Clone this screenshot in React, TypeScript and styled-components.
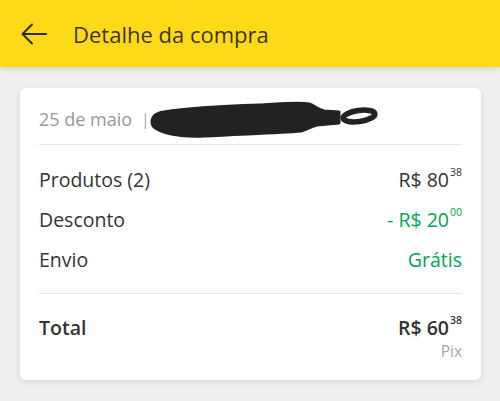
import styled, { createGlobalStyle } from 'styled-components';

const GlobalStyle = createGlobalStyle`
	html, body {
		margin: 0;
		padding: 0;
		background: #efefef;
		font-family: 'Open Sans', 'Noto Sans', sans-serif;
	}
`;

const Page = styled.div`
	width: 500px;
	height: 401px;
	background: #efefef;
	overflow: hidden;
`;

const Header = styled.header`
	height: 67px;
	background: #fdda17;
	display: flex;
	align-items: center;
	padding-left: 21px;
	box-shadow: 0 2px 6px rgba(0, 0, 0, 0.12);
	position: relative;
`;

const BackButton = styled.div`
	width: 26px;
	height: 24px;
	display: flex;
	align-items: center;
	margin-right: 26px;
`;

const Title = styled.h1`
	margin: 0;
	font-size: 22px;
	font-weight: 400;
	color: rgba(0, 0, 0, 0.78);
`;

const Content = styled.main`
	padding: 21px 19px 0 20px;
`;

const Card = styled.section`
	background: #fff;
	border-radius: 6px;
	box-shadow: 0 2px 6px rgba(0, 0, 0, 0.1);
	padding: 0 19px;
`;

const DateRow = styled.div`
	height: 56px;
	display: flex;
	align-items: center;
	padding-top: 5px;
	box-sizing: border-box;
	color: #999;
	font-size: 18px;
	position: relative;
`;

const Separator = styled.span`
	margin: 0 8px 0 9px;
	font-size: 16px;
	color: #aaa;
`;

const Redaction = styled.svg`
	position: absolute;
	left: 100px;
	top: 12px;
`;

const Divider = styled.hr`
	margin: 0;
	border: none;
	border-top: 1px solid #e6e6e6;
`;

const Lines = styled.div`
	padding: 14px 0;
`;

const Row = styled.div`
	height: 40px;
	display: flex;
	align-items: center;
	justify-content: space-between;
	font-size: 19.5px;
	color: #333;
`;

const Value = styled.span<{ $green?: boolean; $bold?: boolean }>`
	color: ${(p) => (p.$green ? '#00a650' : '#333')};
	font-weight: ${(p) => (p.$bold ? 600 : 400)};
`;

const Cents = styled.sup`
	font-size: 10.5px;
	vertical-align: top;
	position: relative;
	top: -1px;
	margin-left: 1px;
`;

const TotalBlock = styled.div`
	padding: 19px 0 19px;
`;

const TotalRow = styled(Row)`
	height: 28px;
	font-weight: 600;
`;

const Method = styled.div`
	text-align: right;
	font-size: 15.5px;
	color: #a6a6a6;
	line-height: 20px;
`;

const Price = ({ whole, cents, green, bold, prefix }: { whole: string; cents: string; green?: boolean; bold?: boolean; prefix?: string }) => (
	<Value $green={green} $bold={bold}>
		{prefix}R$ {whole}
		<Cents>{cents}</Cents>
	</Value>
);

export default function App() {
	return (
		<>
			<GlobalStyle />
			<Page>
				<Header>
					<BackButton>
						<svg width="26" height="22" viewBox="0 0 26 22" fill="none" stroke="#2b2b2b" strokeWidth="2" strokeLinecap="round" strokeLinejoin="round">
							<path d="M25 11H2" />
							<path d="M11 1.5L1.5 11L11 20.5" />
						</svg>
					</BackButton>
					<Title>Detalhe da compra</Title>
				</Header>
				<Content>
					<Card>
						<DateRow>
							25 de maio<Separator>|</Separator>#
							<Redaction width="245" height="40" viewBox="0 0 245 40">
								<path
									d="M13 22 C13 16 18 13 25 12 C50 8 90 6 120 5 C140 4 160 2 170 4 C176 6 178 9 185 11 L200 12 L200 23 L178 25 C172 26 168 30 162 31 C140 33 100 34 65 36 C40 37 25 33 18 29 C14 27 13 25 13 22 Z"
									fill="#222"
									stroke="#222"
									strokeWidth="3"
									strokeLinejoin="round"
								/>
								<ellipse cx="220" cy="16" rx="16" ry="5.5" transform="rotate(-8 220 16)" fill="none" stroke="#222" strokeWidth="5.5" />
							</Redaction>
						</DateRow>
						<Divider />
						<Lines>
							<Row>
								<span>Produtos (2)</span>
								<Price whole="80" cents="38" />
							</Row>
							<Row>
								<span>Desconto</span>
								<Price prefix="- " whole="20" cents="00" green />
							</Row>
							<Row>
								<span>Envio</span>
								<Value $green>Grátis</Value>
							</Row>
						</Lines>
						<Divider />
						<TotalBlock>
							<TotalRow>
								<span>Total</span>
								<Price whole="60" cents="38" bold />
							</TotalRow>
							<Method>Pix</Method>
						</TotalBlock>
					</Card>
				</Content>
			</Page>
		</>
	);
}
